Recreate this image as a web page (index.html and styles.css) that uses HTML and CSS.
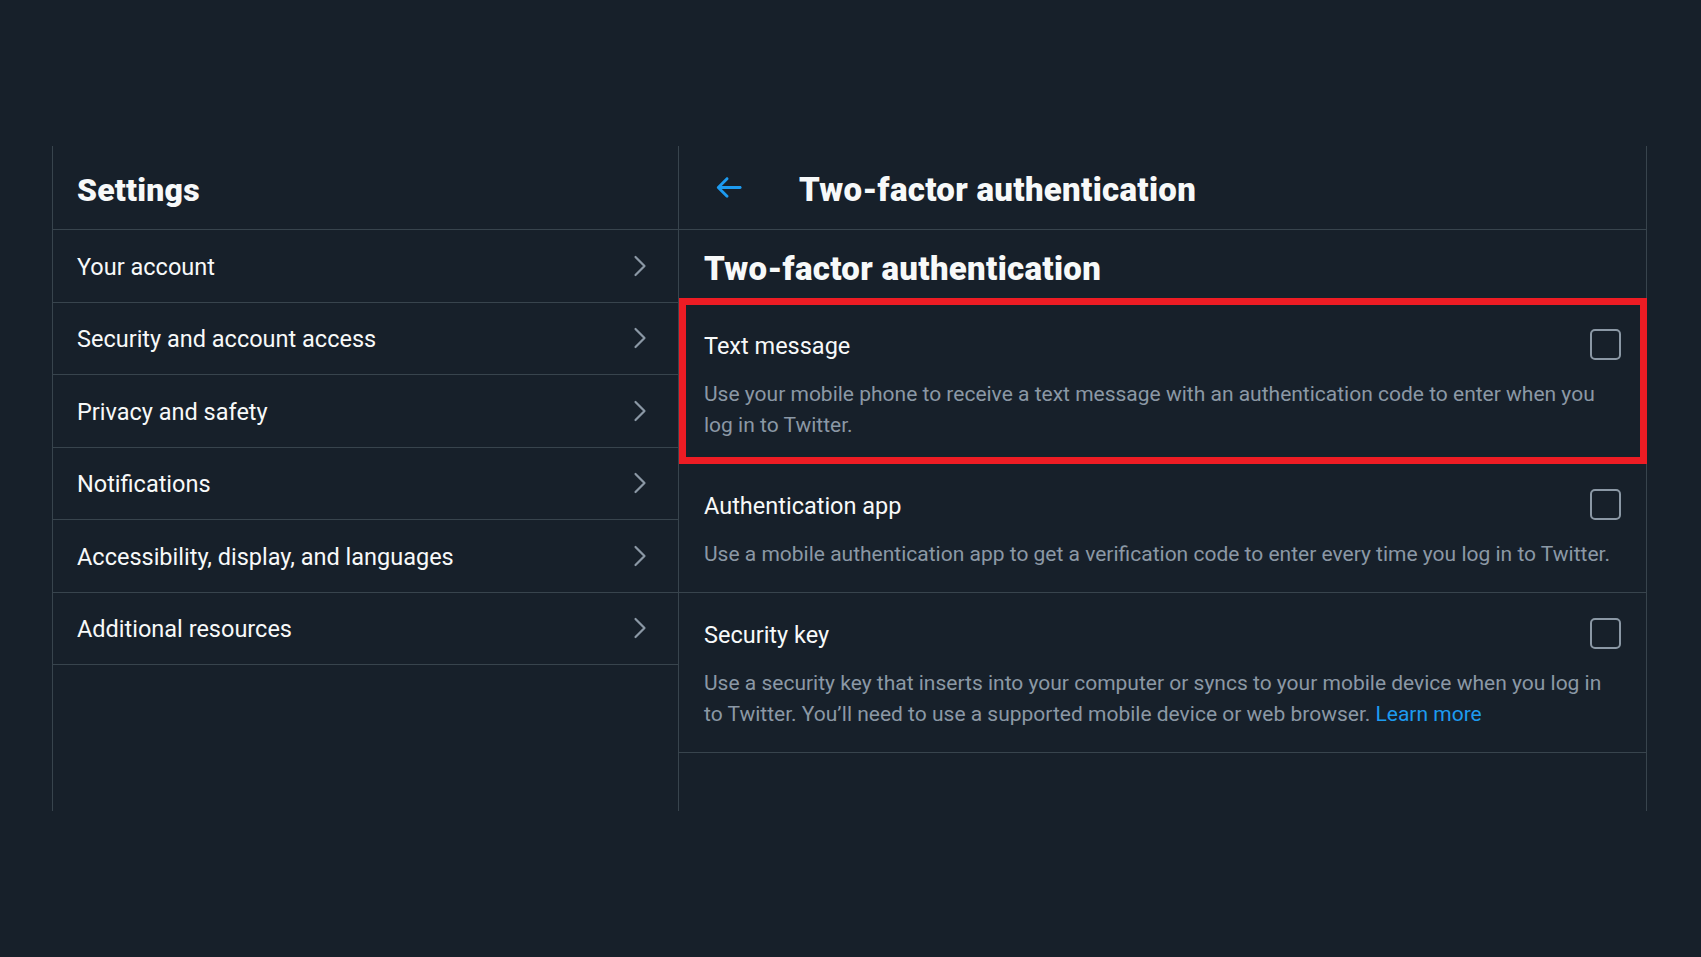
FILE: index.html
```html
<!DOCTYPE html>
<html lang="en">
<head>
<meta charset="utf-8">
<title>Two-factor authentication</title>
<link rel="stylesheet" href="styles.css">
</head>
<body>
<div class="frame">
  <aside class="sidebar">
    <div class="side-header"><h1 class="side-title">Settings</h1></div>
    <nav class="menu">
      <a class="menu-row"><span class="menu-label">Your account</span><svg class="chev" viewBox="0 0 14 22" width="14" height="22"><polyline points="2.5,2 11.5,11 2.5,20"/></svg></a>
      <a class="menu-row"><span class="menu-label">Security and account access</span><svg class="chev" viewBox="0 0 14 22" width="14" height="22"><polyline points="2.5,2 11.5,11 2.5,20"/></svg></a>
      <a class="menu-row"><span class="menu-label">Privacy and safety</span><svg class="chev" viewBox="0 0 14 22" width="14" height="22"><polyline points="2.5,2 11.5,11 2.5,20"/></svg></a>
      <a class="menu-row"><span class="menu-label">Notifications</span><svg class="chev" viewBox="0 0 14 22" width="14" height="22"><polyline points="2.5,2 11.5,11 2.5,20"/></svg></a>
      <a class="menu-row"><span class="menu-label">Accessibility, display, and languages</span><svg class="chev" viewBox="0 0 14 22" width="14" height="22"><polyline points="2.5,2 11.5,11 2.5,20"/></svg></a>
      <a class="menu-row"><span class="menu-label">Additional resources</span><svg class="chev" viewBox="0 0 14 22" width="14" height="22"><polyline points="2.5,2 11.5,11 2.5,20"/></svg></a>
    </nav>
  </aside>
  <main class="main">
    <div class="main-header">
      <svg class="back" viewBox="0 0 24 24" width="35" height="35"><path d="M20 11H7.414l4.293-4.293c.39-.39.39-1.023 0-1.414s-1.023-.39-1.414 0l-6 6c-.39.39-.39 1.023 0 1.414l6 6c.195.195.45.293.707.293s.512-.098.707-.293c.39-.39.39-1.023 0-1.414L7.414 13H20c.553 0 1-.447 1-1s-.447-1-1-1z"/></svg>
      <h2 class="main-title">Two-factor authentication</h2>
    </div>
    <div class="section-head"><h3 class="section-title">Two-factor authentication</h3></div>
    <div class="option highlighted">
      <div class="opt-top"><span class="opt-title">Text message</span><span class="checkbox"></span></div>
      <p class="opt-desc">Use your mobile phone to receive a text message with an authentication code to enter when you log in to Twitter.</p>
      <div class="annotation"></div>
    </div>
    <div class="option">
      <div class="opt-top"><span class="opt-title">Authentication app</span><span class="checkbox"></span></div>
      <p class="opt-desc">Use a mobile authentication app to get a verification code to enter every time you log in to Twitter.</p>
    </div>
    <div class="option">
      <div class="opt-top"><span class="opt-title">Security key</span><span class="checkbox"></span></div>
      <p class="opt-desc">Use a security key that inserts into your computer or syncs to your mobile device when you log in to Twitter. You’ll need to use a supported mobile device or web browser. <a class="link">Learn more</a></p>
    </div>
  </main>
</div>
</body>
</html>
```
FILE: styles.css
```css
* { box-sizing: border-box; }
html, body { margin: 0; padding: 0; }
body {
  background: #17202a;
  width: 1701px;
  height: 957px;
  overflow: hidden;
  font-family: Roboto, "Liberation Sans", sans-serif;
  color: #f7f9f9;
}
.frame {
  display: flex;
  margin: 146px 0 0 52px;
  height: 665px;
}
.sidebar {
  width: 627px;
  border-left: 1px solid #38444d;
  border-right: 1px solid #38444d;
  display: flex;
  flex-direction: column;
}
.side-header {
  height: 84px;
  border-bottom: 1px solid #38444d;
  display: flex;
  align-items: center;
  padding: 4px 24px 0;
}
.side-title {
  margin: 0;
  font-size: 32px;
  font-weight: 900;
  line-height: 40px;
  letter-spacing: 0.2px;
}
.menu { display: flex; flex-direction: column; }
.menu-row {
  height: 72.5px;
  border-bottom: 1px solid #38444d;
  display: flex;
  align-items: center;
  justify-content: space-between;
  padding: 0 31px 0 24px;
}
.menu-label {
  font-size: 23.5px;
  line-height: 31px;
  padding-top: 3px;
  color: #f7f9f9;
}
.chev {
  fill: none;
  stroke: #8b98a5;
  stroke-width: 2.2;
  stroke-linecap: round;
  stroke-linejoin: round;
}
.main {
  width: 968px;
  border-right: 1px solid #38444d;
  display: flex;
  flex-direction: column;
}
.main-header {
  height: 84px;
  border-bottom: 1px solid #38444d;
  display: flex;
  align-items: center;
  padding-left: 32px;
}
.back { fill: #1d9bf0; flex: none; }
.main-title {
  margin: 0 0 0 53px;
  padding-top: 5px;
  font-size: 33px;
  font-weight: 900;
  line-height: 40px;
  letter-spacing: 0.3px;
}
.section-head {
  height: 74px;
  display: flex;
  align-items: center;
  padding: 3px 25px 0;
}
.section-title {
  margin: 0;
  font-size: 33px;
  font-weight: 900;
  line-height: 40px;
  letter-spacing: 0.3px;
}
.option {
  position: relative;
  padding: 25px 25px 22px;
  border-bottom: 1px solid #38444d;
}
.opt-top {
  display: flex;
  align-items: flex-start;
  justify-content: space-between;
  height: 31px;
}
.opt-title {
  font-size: 23.5px;
  line-height: 31px;
  padding-top: 2px;
  color: #f7f9f9;
}
.checkbox {
  width: 31px;
  height: 31px;
  border: 2px solid #8b98a5;
  border-radius: 5px;
}
.opt-desc {
  margin: 19px 0 0;
  font-size: 21px;
  line-height: 31px;
  color: #8b98a5;
}
.link { color: #1d9bf0; }
.annotation {
  position: absolute;
  top: -6px;
  left: 0;
  right: -1px;
  bottom: -1px;
  border: 7px solid #ed1c24;
  pointer-events: none;
}
```
